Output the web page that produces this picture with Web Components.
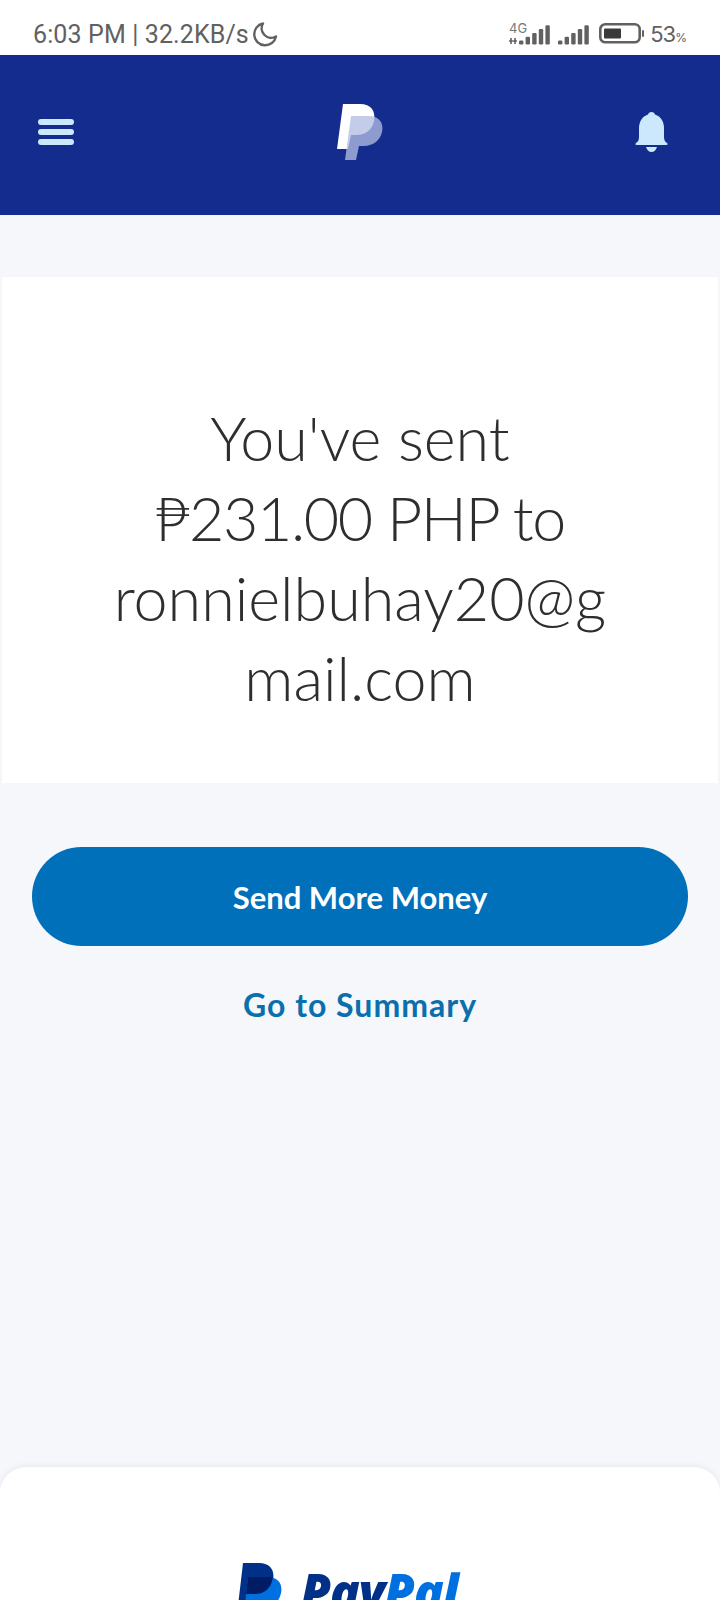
<!DOCTYPE html>
<html>
<head>
<meta charset="utf-8">
<style>
	html, body { margin: 0; padding: 0; height: 100%; overflow: hidden; background: #f5f7fa; }
	body { font-family: Lato, "Open Sans", sans-serif; }
	#app { display: flex; flex-direction: column; height: 1600px; }
	.tight { letter-spacing: -1.4px; }
</style>
</head>
<body>
<div id="app">
	<status-bar></status-bar>
	<app-header></app-header>
	<message-card>You've sent<br><span class="tight">₱231.00 PHP to</span><br>ronnielbuhay20@g<br>mail.com</message-card>
	<pill-button>Send More Money</pill-button>
	<text-link>Go to Summary</text-link>
	<page-footer></page-footer>
</div>

<script>
const define = (name, html) => {
	class el extends HTMLElement {
		connectedCallback() {
			this.attachShadow({ mode: 'open' }).innerHTML = html
		}
	}
	customElements.define(name, el)
}

const bars = (n) => {
	let out = ''
	for (let i = 0; i < n; i++) {
		const h = 4 + i * 3.800
		out += `<rect x="${i * 6.600}" y="${19.500 - h}" width="4.400" height="${h}" rx="1.200"/>`
	}
	return out
}

define('status-bar', `
	<style>
		:host { display: flex; height: 55px; box-sizing: border-box; padding: 0 33px; align-items: center; justify-content: space-between; background: #fff; color: #616161; font: 400 25px Roboto, "Liberation Sans", sans-serif; }
		.l, .r { display: flex; align-items: center; padding-top: 14px; }
		.l span { letter-spacing: .12px; }
		.r { padding-top: 13px; }
		.pct { font: 400 22px Inter, sans-serif; letter-spacing: -1px; margin-left: 6px; }
		.pct small { font-size: 12px; letter-spacing: 0; }
		svg { display: block; fill: #616161; }
	</style>
	<div class="l">
		<span>6:03 PM | 32.2KB/s</span>
		<svg width="26" height="26" viewBox="0 0 26 26" style="margin:-2px 0 0 3px"><path d="M11 2.500A11 11 0 1 0 24 15.500 A9.500 9.500 0 0 1 11 2.500Z" fill="none" stroke="#616161" stroke-width="2.400" stroke-linejoin="round"/></svg>
	</div>
	<div class="r">
		<svg width="41" height="22" viewBox="0 0 41 22" style="overflow:visible">
			<text x="0" y="10" font-size="13" font-family="Inter, Liberation Sans, sans-serif" fill="#777">4G</text>
			<path d="M2 15v6M6 21v-6" stroke="#616161" stroke-width="1.600"/>
			<path d="M0 18h8" stroke="#616161" stroke-width="1.400"/>
			<g transform="translate(10,2)">${bars(5)}</g>
		</svg>
		<svg width="31" height="22" viewBox="0 0 31 22" style="margin-left:8px"><g transform="translate(0,2)">${bars(5)}</g></svg>
		<svg width="45" height="22" viewBox="0 0 45 22" style="margin-left:10px">
			<rect x="1.300" y="1.300" width="39.400" height="18" rx="5" fill="none" stroke="#616161" stroke-width="2.600"/>
			<rect x="5" y="5.500" width="17" height="10" rx="1" fill="#3a3a3a"/>
			<rect x="43" y="7" width="2" height="7" rx="1"/>
		</svg>
		<span class="pct">53<small>%</small></span>
	</div>
`)

define('app-header', `
	<style>
		:host { display: flex; height: 160px; box-sizing: border-box; padding: 0 52px 6px 38px; align-items: center; background: #142c8e; }
		.side { flex: 1; display: flex; }
		.side.end { justify-content: flex-end; }
		svg { display: block; }
		.menu { display: flex; flex-direction: column; gap: 4px; width: 36px; }
		.menu i { display: block; height: 6px; border-radius: 3px; background: #cbe8fd; }
		.logo { margin-left: 14px; }
	</style>
	<div class="side"><div class="menu"><i></i><i></i><i></i></div></div>
	<svg class="logo" width="46" height="56" viewBox="0 0 46 56">
		<path fill="#fff" d="M6 0H23C34 0 39 7 37 17 35 27 27 31 19 31H14L11 45H0Z"/>
		<path fill="#b3bde2" fill-opacity=".77" d="M14 12H32C42 12 47 19 45 28 43 37 35 42 27 42H22L19 56H8Z"/>
	</svg>
	<div class="side end">
		<svg width="33" height="40" viewBox="0 0 33 40">
			<path fill="#cbe8fd" d="M16.500 0c2 0 3 1 3.500 2.500C26 4.500 29 10 29 16v9c0 3 1 5 3 6 1 1 1 2-1 2H2c-2 0-2-1-1-2 2-1 3-3 3-6v-9C4 10 7 4.500 13 2.500 13.500 1 14.500 0 16.500 0Z"/>
			<path fill="#cbe8fd" d="M11 35h11c-1 3-3 5-5.500 5s-4.500-2-5.500-5Z"/>
		</svg>
	</div>
`)

define('message-card', `
	<style>
		:host { display: block; box-sizing: border-box; height: 506px; margin: 62px 2px 0; padding-top: 121px; background: #fff; text-align: center; color: #2c2e2f; font: 300 61px/80px Lato, sans-serif; }
	</style>
	<slot></slot>
`)

define('pill-button', `
	<style>
		:host { display: flex; align-items: center; justify-content: center; height: 99px; margin: 64px 32px 0; border-radius: 50px; background: #0070ba; color: #fff; font: 700 31px Lato, sans-serif; }
	</style>
	<slot></slot>
`)

define('text-link', `
	<style>
		:host { display: block; margin-top: 39px; text-align: center; color: #0a6fae; letter-spacing: 1px; font: 700 32px/40px Lato, sans-serif; }
	</style>
	<slot></slot>
`)

define('page-footer', `
	<style>
		:host { display: flex; flex: 1; justify-content: center; align-items: flex-start; box-sizing: border-box; margin-top: auto; max-height: 133px; padding: 96px 26px 0 0; overflow: hidden; background: #fff; border-radius: 26px 26px 0 0; box-shadow: 0 -2px 5px rgba(0,0,0,.05); }
		.logo { display: flex; align-items: flex-start; gap: 18px; }
		.word { font: italic 800 49px/50px "Open Sans", sans-serif; margin-top: 3px; letter-spacing: -1px; color: #003087; }
		.word b { color: #0070e0; font-weight: inherit; }
		svg { display: block; }
	</style>
	<div class="logo">
		<svg width="46" height="60" viewBox="0 0 46 60">
			<path fill="#003087" d="M7 0H23C34 0 39 7 37 17 35 27 27 31 19 31H13L9 60H0Z"/>
			<path fill="#0070e0" d="M12 14H32C42 14 47 21 45 30 43 40 35 45 27 45H20L17 60H7Z"/>
			<path fill="#001c64" d="M12 14H37C35 27 27 31 19 31H10Z"/>
		</svg>
		<div class="word">Pay<b>Pal</b></div>
	</div>
`)
</script>
</body>
</html>
